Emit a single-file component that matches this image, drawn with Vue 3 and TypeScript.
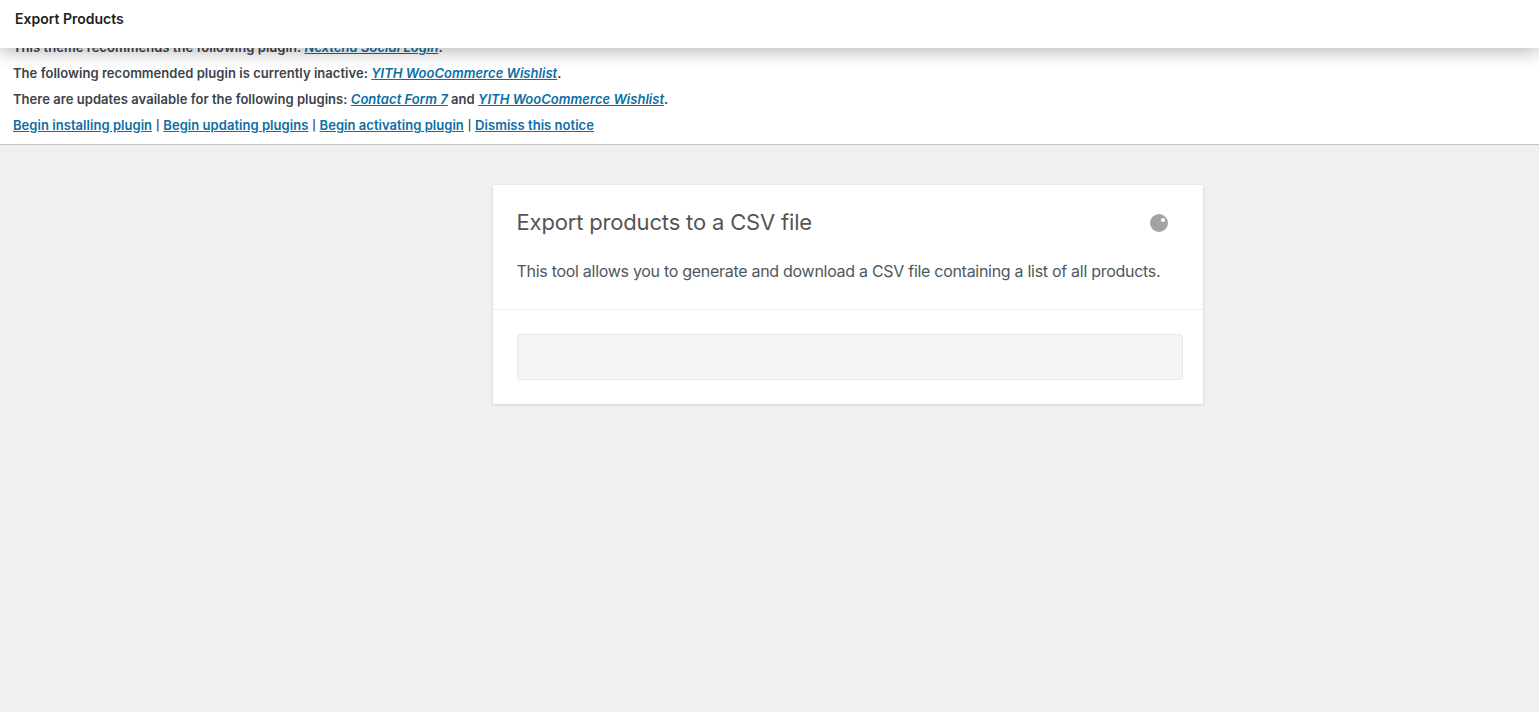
<script setup lang="ts">
const title = 'Export Products'
</script>

<template>
  <div class="page">
    <header class="topbar">{{ title }}</header>
    <section class="notice">
      <p>This theme recommends the following plugin: <a class="em" href="#">Nextend Social Login</a>.</p>
      <p>The following recommended plugin is currently inactive: <a class="em" href="#">YITH WooCommerce Wishlist</a>.</p>
      <p>There are updates available for the following plugins: <a class="em" href="#">Contact Form 7</a> and <a class="em" href="#">YITH WooCommerce Wishlist</a>.</p>
      <p><a href="#">Begin installing plugin</a> <span class="sep">|</span> <a href="#">Begin updating plugins</a> <span class="sep">|</span> <a href="#">Begin activating plugin</a> <span class="sep">|</span> <a href="#">Dismiss this notice</a></p>
    </section>
    <main class="content">
      <div class="card">
        <div class="card-head">
          <div class="title-row">
            <h2>Export products to a CSV file</h2>
            <svg class="spinner" width="18" height="18" viewBox="0 0 18 18" aria-hidden="true">
              <circle cx="9" cy="9" r="9" fill="#a3a3a3" />
              <circle cx="13" cy="6" r="2" fill="#fff" />
            </svg>
          </div>
          <p class="desc">This tool allows you to generate and download a CSV file containing a list of all products.</p>
        </div>
        <div class="card-body">
          <div class="progress"></div>
        </div>
      </div>
    </main>
  </div>
</template>

<style>
html, body { margin: 0; background: #f0f0f0; }
</style>

<style scoped>
.page {
  min-height: 712px;
  background: #f0f0f0;
  font-family: Inter, Roboto, "Liberation Sans", sans-serif;
  color: #3c434a;
  position: relative;
  overflow: hidden;
}
.topbar {
  position: absolute;
  top: 0;
  left: 0;
  right: 0;
  height: 48px;
  box-sizing: border-box;
  padding: 0 15px 12px;
  display: flex;
  align-items: center;
  background: #fff;
  color: #1e1e1e;
  font-size: 14px;
  font-weight: 600;
  box-shadow: 0 3px 18px rgba(0, 0, 0, 0.3);
  z-index: 2;
}
.notice {
  background: #fff;
  padding: 34px 13px 6px;
  border-bottom: 1px solid #c3c4c7;
  font-size: 13px;
  font-weight: 600;
  line-height: 26px;
  letter-spacing: 0.04px;
}
.notice p { margin: 0; }
.notice a { color: #0b6ea5; text-decoration: underline; }
.notice a.em { font-style: italic; }
.sep {
  font-family: Roboto, sans-serif;
  font-size: 14px;
  font-weight: 700;
  line-height: 0;
  padding: 0 0.5px;
}
.content {
  display: flex;
  justify-content: center;
  padding: 40px 0 0 156px;
}
.card {
  width: 710px;
  background: #fff;
  box-shadow: 0 1px 3px rgba(0, 0, 0, 0.13);
}
.card-head {
  padding: 24px 24px 26px;
  border-bottom: 1px solid #eee;
}
.title-row {
  display: flex;
  align-items: center;
  justify-content: space-between;
  padding-right: 11px;
}
.spinner { margin-top: 2px; }
h2 {
  margin: 0;
  font-size: 22px;
  font-weight: 400;
  line-height: 26px;
  letter-spacing: -0.17px;
  color: #555;
}
.desc {
  margin: 24px -10px 0 0;
  font-size: 16px;
  line-height: 24px;
  letter-spacing: -0.29px;
  color: #50575e;
}
.card-body { padding: 24px 20px 24px 24px; }
.progress {
  height: 44px;
  background: #f5f5f5;
  border: 1px solid #e8e8e8;
  border-radius: 3px;
}
</style>
